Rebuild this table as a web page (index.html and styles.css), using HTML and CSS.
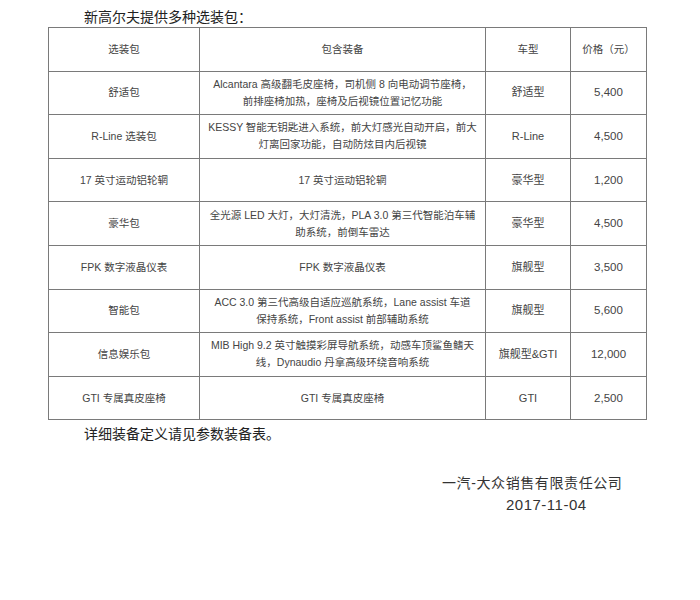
FILE: index.html
```html
<!DOCTYPE html>
<html lang="zh">
<head>
<meta charset="utf-8">
<link rel="stylesheet" href="styles.css">
</head>
<body>
<div class="page">
  <div class="title">新高尔夫提供多种选装包：</div>
  <table class="packs">
    <colgroup>
      <col class="c1"><col class="c2"><col class="c3"><col class="c4">
    </colgroup>
    <tr><td>选装包</td><td>包含装备</td><td>车型</td><td>价格（元）</td></tr>
    <tr><td>舒适包</td><td>Alcantara 高级翻毛皮座椅，司机侧 8 向电动调节座椅，<br>前排座椅加热，座椅及后视镜位置记忆功能</td><td class="type">舒适型</td><td class="num">5,400</td></tr>
    <tr><td>R-Line 选装包</td><td>KESSY 智能无钥匙进入系统，前大灯感光自动开启，前大<br>灯离回家功能，自动防炫目内后视镜</td><td class="type">R-Line</td><td class="num">4,500</td></tr>
    <tr><td>17 英寸运动铝轮辋</td><td>17 英寸运动铝轮辋</td><td class="type">豪华型</td><td class="num">1,200</td></tr>
    <tr><td>豪华包</td><td>全光源 LED 大灯，大灯清洗，PLA 3.0 第三代智能泊车辅<br>助系统，前倒车雷达</td><td class="type">豪华型</td><td class="num">4,500</td></tr>
    <tr><td>FPK 数字液晶仪表</td><td>FPK 数字液晶仪表</td><td class="type">旗舰型</td><td class="num">3,500</td></tr>
    <tr><td>智能包</td><td>ACC 3.0 第三代高级自适应巡航系统，Lane assist 车道<br>保持系统，Front assist 前部辅助系统</td><td class="type">旗舰型</td><td class="num">5,600</td></tr>
    <tr><td>信息娱乐包</td><td>MIB High 9.2 英寸触摸彩屏导航系统，动感车顶鲨鱼鳍天<br>线，Dynaudio 丹拿高级环绕音响系统</td><td class="type">旗舰型&amp;GTI</td><td class="num">12,000</td></tr>
    <tr><td>GTI 专属真皮座椅</td><td>GTI 专属真皮座椅</td><td class="type">GTI</td><td class="num">2,500</td></tr>
  </table>
  <div class="note">详细装备定义请见参数装备表。</div>
  <div class="sign">
    <div class="company">一汽-大众销售有限责任公司</div>
    <div class="date">2017-11-04</div>
  </div>
</div>
</body>
</html>
```
FILE: styles.css
```css
html, body {
  margin: 0;
  padding: 0;
  background: #ffffff;
}
body {
  font-family: "Liberation Sans", "Noto Sans CJK SC", sans-serif;
  color: #333;
}
.page {
  padding: 7px 0 0 48px;
}
.title {
  margin-left: 36px;
  font-size: 14px;
  line-height: 20px;
  color: #222;
  font-weight: 400;
}
.packs {
  border-collapse: collapse;
  table-layout: fixed;
  width: 598px;
  font-size: 10.5px;
  color: #444;
}
.c1 { width: 151px; }
.c2 { width: 286px; }
.c3 { width: 85px; }
.c4 { width: 76px; }
.packs td {
  border: 1px solid #7a7a7a;
  height: 42.6px;
  padding: 0 4px;
  text-align: center;
  vertical-align: middle;
  line-height: 17px;
  white-space: nowrap;
}
.packs td.type {
  font-size: 11px;
}
.packs td.num {
  font-size: 11.5px;
}
.note {
  margin: 4px 0 0 36px;
  font-size: 14px;
  line-height: 20px;
  color: #222;
  font-weight: 400;
}
.sign {
  margin: 29px 0 0 394px;
  line-height: 21px;
  color: #333;
}
.company {
  font-size: 14px;
  letter-spacing: 0.6px;
}
.date {
  padding-left: 64px;
  font-size: 15px;
  letter-spacing: 0.5px;
}
```
